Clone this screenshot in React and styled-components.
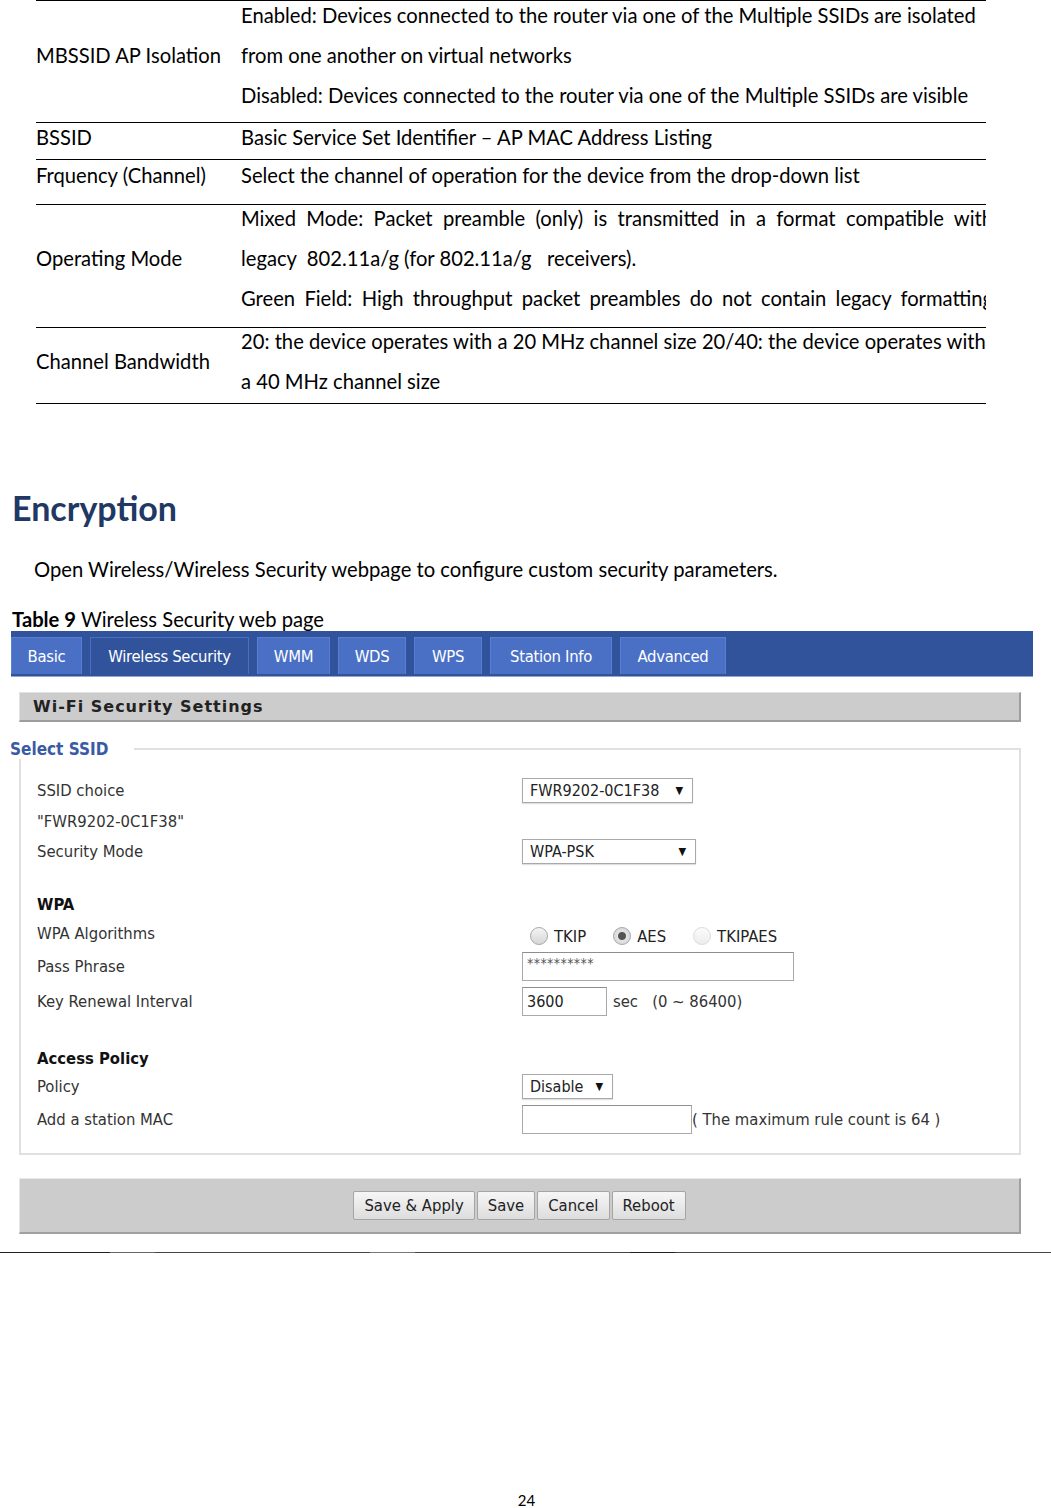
import React from 'react';
import styled, { createGlobalStyle } from 'styled-components';

const GlobalStyle = createGlobalStyle`
  html, body {
    margin: 0;
    padding: 0;
    background: #ffffff;
  }
  body {
    font-family: Lato, "Open Sans", sans-serif;
    color: #000;
  }
`;

const docRows = [
  {
    label: 'MBSSID AP Isolation',
    lift: -6,
    lh: 40,
    pb: 7,
    lines: [
      { text: 'Enabled: Devices connected to the router via one of the Multiple SSIDs are isolated' },
      { text: 'from one another on virtual networks' },
      { text: 'Disabled: Devices connected to the router via one of the Multiple SSIDs are visible' },
    ],
  },
  { label: 'BSSID', lift: 0, lh: 28, pb: 8, lines: [{ text: 'Basic Service Set Identifier \u2013 AP MAC Address Listing' }] },
  { label: 'Frquency (Channel)', lift: 0, lh: 30, pb: 14, lines: [{ text: 'Select the channel of operation for the device from the drop-down list' }] },
  {
    label: 'Operating Mode',
    lift: -7,
    lh: 40,
    pb: 9,
    lines: [
      { text: 'Mixed Mode: Packet preamble (only) is transmitted in a format compatible with', justify: true },
      { text: 'legacy \u00a0802.11a/g (for 802.11a/g \u00a0 receivers).' },
      { text: 'Green Field: High throughput packet preambles do not contain legacy formatting', justify: true },
    ],
  },
  {
    label: 'Channel Bandwidth',
    lift: -7,
    lh: 40,
    pb: 2,
    lines: [
      { text: '20: the device operates with a 20 MHz channel size 20/40: the device operates with' },
      { text: 'a 40 MHz channel size' },
    ],
  },
];

const tabs = [
  { name: 'Basic', w: 71 },
  { name: 'Wireless Security', w: 159, active: true },
  { name: 'WMM', w: 73 },
  { name: 'WDS', w: 68 },
  { name: 'WPS', w: 68 },
  { name: 'Station Info', w: 122 },
  { name: 'Advanced', w: 106 },
];

export default function App() {
  return (
    <Page>
      <GlobalStyle />
      <DocTable>
        {docRows.map((r) => (
          <DocRow key={r.label} $lift={r.lift} $pb={r.pb}>
            <DocLabel $lh={r.lh}>{r.label}</DocLabel>
            <DocDesc>
              {r.lines.map((l, i) => (
                <DocLine key={i} $lh={r.lh} $justify={l.justify}>{l.text}</DocLine>
              ))}
            </DocDesc>
          </DocRow>
        ))}
      </DocTable>

      <Heading>Encryption</Heading>
      <Para>Open Wireless/Wireless Security webpage to configure custom security parameters.</Para>
      <Caption><b>Table 9</b> Wireless Security web page</Caption>

      <Shot>
        <TabBar>
          {tabs.map((t) => (
            <Tab key={t.name} $w={t.w} $active={t.active}>{t.name}</Tab>
          ))}
        </TabBar>

        <SectionBar>Wi-Fi Security Settings</SectionBar>

        <Fieldset>
          <Legend>Select SSID</Legend>
          <FormRow $h={32}>
            <FormLabel>SSID choice</FormLabel>
            <Select $w={171}>FWR9202-0C1F38<Arrow>▼</Arrow></Select>
          </FormRow>
          <FormRow $h={30}>
            <FormLabel>"FWR9202-0C1F38"</FormLabel>
          </FormRow>
          <FormRow $h={30}>
            <FormLabel>Security Mode</FormLabel>
            <Select $w={174}>WPA-PSK<Arrow>▼</Arrow></Select>
          </FormRow>
          <Spacer $h={24} />
          <FormRow $h={28}>
            <FormLabel $bold>WPA</FormLabel>
          </FormRow>
          <FormRow $h={30}>
            <FormLabel>WPA Algorithms</FormLabel>
            <Radios>
              <RadioOpt><Radio /> TKIP</RadioOpt>
              <RadioOpt><Radio $checked /> AES</RadioOpt>
              <RadioOpt><Radio $faded /> TKIPAES</RadioOpt>
            </Radios>
          </FormRow>
          <FormRow $h={36}>
            <FormLabel>Pass Phrase</FormLabel>
            <TextBox $w={272} $masked>**********</TextBox>
          </FormRow>
          <FormRow $h={34}>
            <FormLabel>Key Renewal Interval</FormLabel>
            <Inline>
              <TextBox $w={85}>3600</TextBox>
              <Hint>sec &nbsp;&nbsp;(0 ~ 86400)</Hint>
            </Inline>
          </FormRow>
          <Spacer $h={26} />
          <FormRow $h={28}>
            <FormLabel $bold>Access Policy</FormLabel>
          </FormRow>
          <FormRow $h={28}>
            <FormLabel>Policy</FormLabel>
            <Select $w={91}>Disable<Arrow>▼</Arrow></Select>
          </FormRow>
          <FormRow $h={38}>
            <FormLabel>Add a station MAC</FormLabel>
            <Inline>
              <TextBox $w={170} />
              <Note>( The maximum rule count is 64 )</Note>
            </Inline>
          </FormRow>
        </Fieldset>

        <ButtonBar>
          <Btn>Save &amp; Apply</Btn>
          <Btn>Save</Btn>
          <Btn>Cancel</Btn>
          <Btn>Reboot</Btn>
        </ButtonBar>
      </Shot>

      <Rule />
      <PageNum>24</PageNum>
    </Page>
  );
}

const Page = styled.div`
  width: 1051px;
  height: 1508px;
  display: flex;
  flex-direction: column;
  overflow: hidden;
`;

/* document table */

const DocTable = styled.div`
  margin-left: 36px;
  width: 950px;
  border-top: 1px solid #000;
  font-size: 20.2px;
`;

const DocRow = styled.div`
  display: grid;
  grid-template-columns: 205px 1fr;
  align-items: center;
  margin-top: ${(p) => p.$lift}px;
  padding-bottom: ${(p) => p.$pb}px;
  border-bottom: 1px solid #000;
`;

const DocLabel = styled.div`
  line-height: ${(p) => p.$lh}px;
  white-space: nowrap;
`;

const DocDesc = styled.div`
  overflow: hidden;
`;

const DocLine = styled.div`
  line-height: ${(p) => p.$lh}px;
  height: ${(p) => p.$lh}px;
  white-space: ${(p) => (p.$justify ? 'normal' : 'nowrap')};
  width: ${(p) => (p.$justify ? '752px' : 'auto')};
  text-align: ${(p) => (p.$justify ? 'justify' : 'left')};
  text-align-last: ${(p) => (p.$justify ? 'justify' : 'auto')};
`;

const Heading = styled.h2`
  margin: 84px 0 0 12px;
  font-size: 34px;
  line-height: 40px;
  font-weight: 700;
  color: #1f3864;
`;

const Para = styled.p`
  margin: 27px 0 0 34px;
  font-size: 20.2px;
  line-height: 28px;
`;

const Caption = styled.p`
  margin: 24px 0 0 12px;
  font-size: 20.2px;
  line-height: 24px;
  b {
    font-weight: 700;
  }
`;

/* router screenshot */

const Shot = styled.div`
  margin-left: 11px;
  width: 1022px;
  font-family: "DejaVu Sans Condensed", "DejaVu Sans", sans-serif;
  color: #333;
`;

const TabBar = styled.div`
  height: 46px;
  background: #30539b;
  border-bottom: 1px solid #8fa5d4;
  display: flex;
  align-items: flex-end;
  gap: 8px;
  padding-bottom: 2px;
  box-sizing: border-box;
`;

const Tab = styled.div`
  width: ${(p) => p.$w}px;
  height: 37px;
  box-sizing: border-box;
  display: flex;
  align-items: center;
  justify-content: center;
  font-size: 16.5px;
  color: #fff;
  letter-spacing: -0.3px;
  background: ${(p) => (p.$active ? '#30539b' : '#4a70c6')};
  border: 1px solid ${(p) => (p.$active ? '#4a6fc0' : '#5a7fd2')};
  border-bottom: none;
`;

const SectionBar = styled.div`
  margin: 15px 12px 0 8px;
  height: 30px;
  box-sizing: border-box;
  background: #cccccc;
  border-top: 1px solid #e2e2e2;
  border-left: 1px solid #e2e2e2;
  border-right: 2px solid #9d9d9d;
  border-bottom: 2px solid #9d9d9d;
  padding-left: 13px;
  display: flex;
  align-items: center;
  font-family: "DejaVu Sans", Verdana, sans-serif;
  font-weight: 700;
  font-size: 16px;
  letter-spacing: 1px;
  color: #222;
`;

const Fieldset = styled.fieldset`
  margin: 17px 12px 0 8px;
  padding: 15px 0 15px 0;
  border: 2px solid #e0e0e0;
  min-width: 0;
`;

const Legend = styled.legend`
  margin-left: -11px;
  padding: 0 26px 0 0;
  font-weight: 700;
  font-size: 17px;
  line-height: 20px;
  color: #3a5aa6;
  background: #fff;
`;

const FormRow = styled.div`
  display: grid;
  grid-template-columns: 485px 1fr;
  align-items: center;
  height: ${(p) => p.$h}px;
  padding-left: 16px;
`;

const Spacer = styled.div`
  height: ${(p) => p.$h}px;
`;

const FormLabel = styled.div`
  font-size: 16.5px;
  font-weight: ${(p) => (p.$bold ? 700 : 400)};
  color: ${(p) => (p.$bold ? '#111' : '#333')};
  white-space: nowrap;
`;

const Select = styled.div`
  width: ${(p) => p.$w}px;
  height: 25px;
  box-sizing: border-box;
  border: 1px solid #a9a9a9;
  box-shadow: 0 1px 1px rgba(0, 0, 0, 0.12);
  background: #fff;
  display: flex;
  align-items: center;
  justify-content: space-between;
  padding: 0 9px 0 7px;
  font-size: 16px;
  color: #222;
`;

const Arrow = styled.span`
  font-size: 11px;
  color: #111;
`;

const Radios = styled.div`
  display: flex;
  align-items: center;
  gap: 27px;
  padding-left: 8px;
  margin-top: 6px;
`;

const RadioOpt = styled.label`
  display: flex;
  align-items: center;
  gap: 6px;
  font-size: 16.5px;
  color: #222;
`;

const Radio = styled.span`
  width: 18px;
  height: 18px;
  border-radius: 50%;
  box-sizing: border-box;
  border: 1px solid ${(p) => (p.$faded ? '#dcdcdc' : '#a8a8a8')};
  background: ${(p) =>
    p.$checked
      ? 'radial-gradient(circle, #555 0 3.5px, #e4e4e4 4.5px, #d0d0d0 100%)'
      : p.$faded
      ? 'linear-gradient(#fbfbfb, #ededed)'
      : 'linear-gradient(#f4f4f4, #d6d6d6)'};
`;

const TextBox = styled.div`
  width: ${(p) => p.$w}px;
  height: 29px;
  box-sizing: border-box;
  border: 1px solid #a9a9a9;
  border-top-color: #8e8e8e;
  background: #fff;
  padding: ${(p) => (p.$masked ? '2px 4px' : '0 4px')};
  display: flex;
  align-items: ${(p) => (p.$masked ? 'flex-start' : 'center')};
  font-size: ${(p) => (p.$masked ? '14px' : '16px')};
  letter-spacing: ${(p) => (p.$masked ? '0.4px' : '0')};
  color: ${(p) => (p.$masked ? '#555' : '#222')};
`;

const Inline = styled.div`
  display: flex;
  align-items: center;
`;

const Hint = styled.span`
  margin-left: 6px;
  font-size: 16.5px;
  color: #333;
`;

const Note = styled.span`
  font-size: 16.5px;
  color: #333;
`;

const ButtonBar = styled.div`
  margin: 23px 12px 0 8px;
  height: 56px;
  box-sizing: border-box;
  background: #cccccc;
  border-top: 1px solid #e8e8e8;
  border-left: 1px solid #e8e8e8;
  border-right: 2px solid #a0a0a0;
  border-bottom: 2px solid #a0a0a0;
  display: flex;
  justify-content: center;
  align-items: center;
  gap: 2px;
`;

const Btn = styled.button`
  height: 29px;
  padding: 0 10px;
  font-family: "DejaVu Sans Condensed", "DejaVu Sans", sans-serif;
  font-size: 16.5px;
  color: #222;
  background: linear-gradient(#f6f6f6, #dddddd);
  border: 1px solid #a5a5a5;
  border-radius: 2px;
`;

const Rule = styled.div`
  margin-top: 18px;
  height: 1px;
  background: linear-gradient(90deg, #222 0 110px, #666 110px 155px, #444 155px 370px, #777 370px 415px, #444 415px 630px, #222 630px 675px, #444 675px);
`;

const PageNum = styled.div`
  margin-top: auto;
  height: 15px;
  text-align: center;
  font-size: 15px;
  line-height: 15px;
  padding-left: 2px;
`;
